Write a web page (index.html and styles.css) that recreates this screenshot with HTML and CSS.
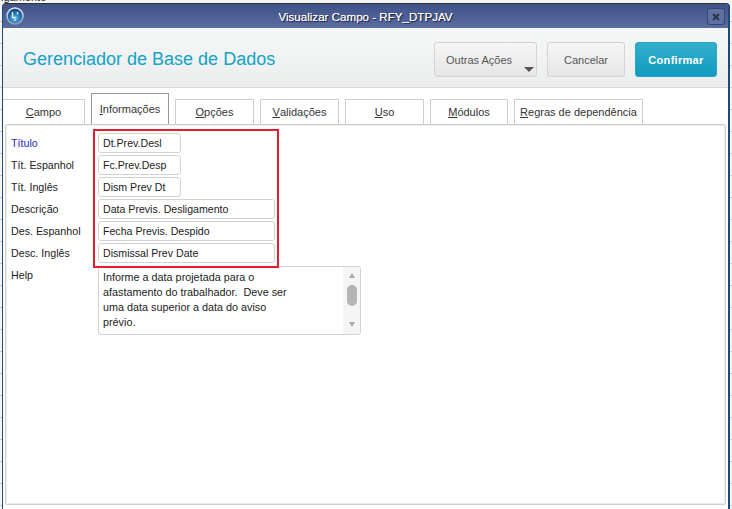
FILE: index.html
```html
<!DOCTYPE html>
<html lang="pt">
<head>
<meta charset="utf-8">
<title>Visualizar Campo</title>
<link rel="stylesheet" href="styles.css">
</head>
<body>
<div class="backdrop">
  <span class="back-text">igamento</span>
</div>
<div class="window">
  <div class="titlebar">
    <svg class="logo" width="18" height="18" viewBox="0 0 18 18">
      <defs>
        <radialGradient id="g" cx="50%" cy="70%" r="65%"><stop offset="0" stop-color="#58b0e8"/><stop offset=".7" stop-color="#1c6bad"/><stop offset="1" stop-color="#0f4a80"/></radialGradient>
        <linearGradient id="r" x1="0" y1="0" x2="0" y2="1"><stop offset="0" stop-color="#e4e8ee"/><stop offset="1" stop-color="#8a97a8"/></linearGradient>
      </defs>
      <circle cx="9" cy="9" r="8.8" fill="url(#r)"/>
      <circle cx="9" cy="9" r="7.2" fill="url(#g)"/>
      <path d="M6.5 5v5.5h4M11.5 5v2.5" stroke="#e4f0fa" stroke-width="1.4" fill="none"/>
      <circle cx="9" cy="12.8" r="1" fill="#cfe4f5"/>
    </svg>
    <span class="title">Visualizar Campo - RFY_DTPJAV</span>
    <button class="close"><svg width="8" height="8" viewBox="0 0 8 8"><path d="M1 1l6 6M7 1l-6 6" stroke="#2c3444" stroke-width="2"/></svg></button>
  </div>
  <header class="head">
    <h1 class="brand">Gerenciador de Base de Dados</h1>
    <div class="actions">
      <button class="btn more">Outras Ações<i class="caret"></i></button>
      <button class="btn cancel">Cancelar</button>
      <button class="btn ok">Confirmar</button>
    </div>
  </header>
  <nav class="tabs">
    <div class="tab w1"><u>C</u>ampo</div>
    <div class="tab w2 active"><u>I</u>nformações</div>
    <div class="tab w3"><u>O</u>pções</div>
    <div class="tab w4"><u>V</u>alidações</div>
    <div class="tab w5"><u>U</u>so</div>
    <div class="tab w6"><u>M</u>ódulos</div>
    <div class="tab w7"><u>R</u>egras de dependência</div>
  </nav>
  <main class="panel">
    <div class="form">
      <label class="lbl req">Título</label><div class="field short">Dt.Prev.Desl</div>
      <label class="lbl">Tít. Espanhol</label><div class="field short">Fc.Prev.Desp</div>
      <label class="lbl">Tít. Inglês</label><div class="field short">Dism Prev Dt</div>
      <label class="lbl">Descrição</label><div class="field long">Data Previs. Desligamento</div>
      <label class="lbl">Des. Espanhol</label><div class="field long">Fecha Previs. Despido</div>
      <label class="lbl">Desc. Inglês</label><div class="field long">Dismissal Prev Date</div>
      <label class="lbl help">Help</label>
      <div class="memo">
        <div class="memo-text">Informe a data projetada para o<br>afastamento do trabalhador.&nbsp; Deve ser<br>uma data superior a data do aviso<br>prévio.</div>
        <div class="scroll">
          <i class="arrow up"></i>
          <i class="thumb"></i>
          <i class="arrow down"></i>
        </div>
      </div>
    </div>
    <div class="highlight"></div>
  </main>
</div>
</body>
</html>
```
FILE: styles.css
```css
* { box-sizing: border-box; }
html, body { margin: 0; height: 100%; overflow: hidden; }
body { background: #f6f6f6; font-family: "Liberation Sans", Arial, sans-serif; font-size: 11px; color: #222; }
.backdrop {
  position: absolute; inset: 0;
  background: repeating-linear-gradient(#f6f6f6 0 21px, #c8c8c8 21px 22px);
}
.back-text { position: absolute; left: 1px; top: -9px; font-size: 11px; color: #222; }
.window {
  position: absolute; left: 2px; top: 3px; width: 728px; height: 506px;
  display: flex; flex-direction: column;
  background: #fff; border: 1px solid #1f4a7c; border-top-color: #333; border-radius: 4px 4px 0 0;
  border-right-width: 2px; border-bottom: 0;
}
.titlebar {
  height: 24px; flex: none; display: flex; align-items: center; justify-content: center; position: relative;
  background: linear-gradient(#3f5289, #5a6ca0);
}
.logo { position: absolute; left: 3px; top: 3px; }
.title { color: #fff; font-size: 11.6px; text-shadow: 1px 1px 1px #141a30, 0 0 .5px #fff; }
.close {
  position: absolute; right: 3px; top: 4px; width: 18px; height: 17px; padding: 0;
  display: flex; align-items: center; justify-content: center;
  background: #5e71a5; border: 1px solid #35466f; border-radius: 3px;
}
.head {
  height: 60px; flex: none; display: flex; align-items: center; justify-content: space-between;
  padding: 4px 11px 0 20px;
  background: linear-gradient(#f6f7f8, #eceded); border-bottom: 1px solid #d9d9d9;
}
.brand { margin: 0; font-size: 18px; font-weight: 400; color: #12a3c6; }
.actions { display: flex; gap: 10px; }
.btn {
  height: 35px; padding: 0; font: 11px "Liberation Sans", Arial, sans-serif; color: #555;
  background: linear-gradient(#f6f6f6, #e6e6e6); border: 1px solid #d3d3d3; border-radius: 3px; position: relative;
}
.more { width: 103px; text-align: left; padding-left: 11px; }
.cancel { width: 78px; }
.ok { width: 82px; color: #fff; font-weight: 700; letter-spacing: .3px; background: linear-gradient(#35aecb, #0e9cc0); border-color: #2aa4c4; }
.caret { position: absolute; right: 2px; bottom: 4px; border: 5px solid transparent; border-top: 5px solid #555; border-bottom: 0; }
.tabs { display: flex; flex: none; height: 36px; align-items: flex-end; gap: 6px; }
.tab {
  height: 25px; display: flex; align-items: center; justify-content: center; flex: none;
  border: 1px solid #cfcfcf; border-bottom: 0; background: #fff; color: #333;
}
.tab.active { height: 31px; border: 1px solid #999; border-bottom: 0; padding-bottom: 1px; }
.w1 { width: 82px; border-left: 0; }
.w2 { width: 78px; }
.w3 { width: 79px; }
.w4 { width: 79px; }
.w5 { width: 79px; }
.w6 { width: 78px; }
.w7 { width: 129px; }
.panel {
  flex: 1; position: relative; margin: 0 2px 4px 2px;
  background: #fff; border: 1px solid #cfcfcf; box-shadow: inset 0 0 0 1px #eee; border-radius: 2px;
  padding: 8px 0 0 5px;
}
.form { display: grid; grid-template-columns: 87px auto; justify-content: start; row-gap: 2px; }
.lbl { height: 20px; line-height: 20px; color: #222; font-size: 10.7px; }
.req { color: #2a2ac8; }
.help { line-height: 18px; margin-top: 1px; }
.field {
  height: 20px; line-height: 18px; padding-left: 4px; background: #fff;
  border: 1px solid #d2d2d2; border-radius: 3px; color: #222; font-size: 10.6px;
}
.short { width: 83px; }
.long { width: 177px; }
.memo { width: 263px; height: 69px; margin-top: 1px; display: flex; border: 1px solid #d2d2d2; border-radius: 3px; justify-content: space-between; overflow: hidden; }
.memo-text { padding: 3px 0 0 4px; line-height: 15px; font-size: 10.8px; white-space: nowrap; }
.scroll { width: 17px; background: #f5f5f5; display: flex; flex-direction: column; align-items: center; padding-top: 6px; }
.arrow { width: 0; height: 0; border: 3.5px solid transparent; }
.up { border-bottom: 5px solid #aaa; border-top: 0; }
.down { border-top: 5px solid #aaa; border-bottom: 0; margin-top: 16px; }
.thumb { width: 10px; height: 21px; background: #b5b5b5; border-radius: 5px; margin-top: 7px; }
.highlight { position: absolute; left: 87px; top: 4px; width: 186px; height: 139px; border: 2px solid #e81c2c; pointer-events: none; }
```
